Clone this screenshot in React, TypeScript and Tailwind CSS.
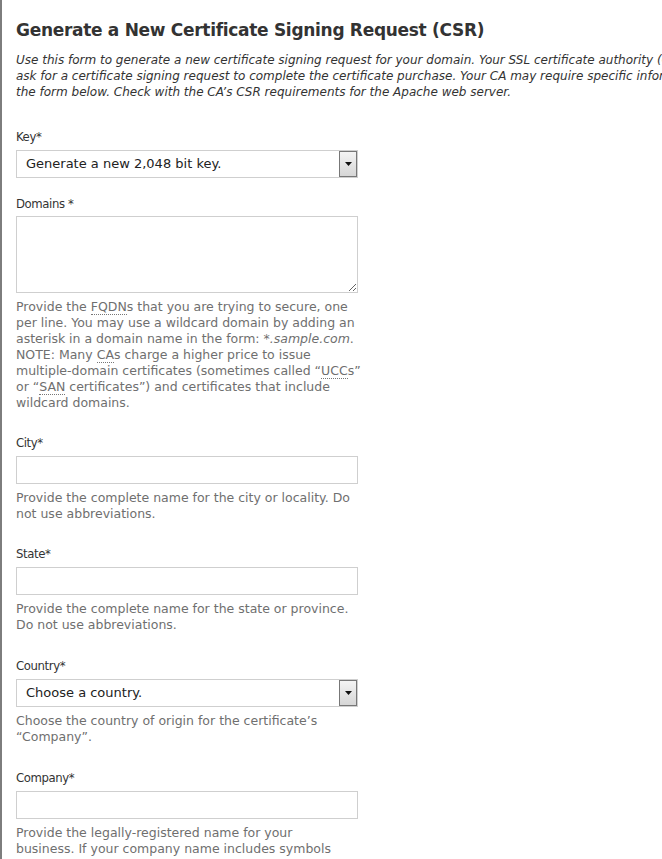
import React from 'react';

const Abbr = ({ children, title }: { children: React.ReactNode; title: string }) => (
  <abbr title={title} className="no-underline border-b border-dotted border-[#777]">
    {children}
  </abbr>
);

const Label = ({ children }: { children: React.ReactNode }) => (
  <div
    className="text-[13px] leading-[16px] text-[#333] mb-[5px] tracking-[-0.4px]"
    style={{ fontFamily: '"DejaVu Sans Condensed", "DejaVu Sans", sans-serif' }}
  >
    {children}
  </div>
);

const Help = ({ children }: { children: React.ReactNode }) => (
  <p className="mt-[6px] text-[12.5px] leading-[16px] text-[#6f6f6f] whitespace-nowrap">{children}</p>
);

const TextInput = () => (
  <input
    type="text"
    className="block w-[342px] h-[28px] border border-[#cfcfcf] bg-white px-2 text-[12px] outline-none"
  />
);

const Select = ({ value }: { value: string }) => (
  <div className="relative w-[342px] h-[28px] border border-[#cfcfcf] bg-white flex items-center">
    <span className="pl-[9px] text-[13px] text-[#222]">{value}</span>
    <div className="absolute right-0 top-0 bottom-0 w-[18px] border border-[#777] bg-gradient-to-b from-[#f4f4f4] to-[#d6d6d6] flex items-center justify-center">
      <svg width="7" height="4" viewBox="0 0 7 4">
        <path d="M0 0h7L3.5 4z" fill="#111" />
      </svg>
    </div>
  </div>
);

export default function App() {
  return (
    <div
      className="min-h-screen w-[662px] overflow-hidden bg-white border-l-2 border-[#7d7d7d] pl-[14px] pt-[18px] pb-8"
      style={{ fontFamily: '"DejaVu Sans", Verdana, sans-serif' }}
    >
      <h1 className="text-[17px] leading-[24px] font-bold text-[#333] tracking-[-0.3px]">
        Generate a New Certificate Signing Request (CSR)
      </h1>

      <p className="mt-[10px] text-[12px] leading-[16px] italic text-[#333] whitespace-nowrap">
        Use this form to generate a new certificate signing request for your domain. Your SSL certificate authority (CA) will
        <br />
        ask for a certificate signing request to complete the certificate purchase. Your CA may require specific information in
        <br />
        the form below. Check with the CA’s CSR requirements for the Apache web server.
      </p>

      <div className="mt-[29px]">
        <Label>Key*</Label>
        <Select value="Generate a new 2,048 bit key." />
      </div>

      <div className="mt-[18px]">
        <div className="mb-[-1px]">
          <Label>Domains *</Label>
        </div>
        <textarea className="block w-[342px] h-[77px] border border-[#cfcfcf] bg-white resize-y outline-none" />
        <Help>
          Provide the <Abbr title="Fully Qualified Domain Name">FQDN</Abbr>s that you are trying to secure, one
          <br />
          per line. You may use a wildcard domain by adding an
          <br />
          asterisk in a domain name in the form: <em>*.sample.com</em>.
          <br />
          NOTE: Many <Abbr title="Certificate Authority">CA</Abbr>s charge a higher price to issue
          <br />
          multiple-domain certificates (sometimes called “<Abbr title="Unified Communications Certificate">UCC</Abbr>s”
          <br />
          or “<Abbr title="Subject Alternative Name">SAN</Abbr> certificates”) and certificates that include
          <br />
          wildcard domains.
        </Help>
      </div>

      <div className="mt-[24px]">
        <Label>City*</Label>
        <TextInput />
        <Help>
          Provide the complete name for the city or locality. Do
          <br />
          not use abbreviations.
        </Help>
      </div>

      <div className="mt-[24px]">
        <Label>State*</Label>
        <TextInput />
        <Help>
          Provide the complete name for the state or province.
          <br />
          Do not use abbreviations.
        </Help>
      </div>

      <div className="mt-[25px]">
        <Label>Country*</Label>
        <Select value="Choose a country." />
        <Help>
          Choose the country of origin for the certificate’s
          <br />
          “Company”.
        </Help>
      </div>

      <div className="mt-[25px]">
        <Label>Company*</Label>
        <TextInput />
        <Help>
          Provide the legally-registered name for your
          <br />
          business. If your company name includes symbols
          <br />
          other than a period or comma, check with your CA to
        </Help>
      </div>
    </div>
  );
}
